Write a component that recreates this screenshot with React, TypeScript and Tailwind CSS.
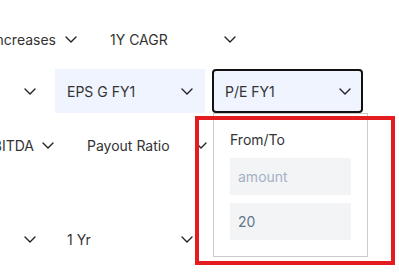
import React from "react";

const Chevron = () => (
    <svg width="12" height="7" viewBox="0 0 12 7" fill="none" className="shrink-0">
        <polyline points="1,1 6,6 11,1" stroke="#222" strokeWidth="1.4" strokeLinecap="round" strokeLinejoin="round" />
    </svg>
);

interface SelectProps {
    label?: string,
    w: string,
    active?: boolean,
    focused?: boolean,
    children?: React.ReactNode
}

function Select({ label, w, active, focused, children }: SelectProps) {
    let cls = "relative flex items-center justify-between h-[44px] pl-3 pr-3 shrink-0 " + w;
    if (active) cls += " bg-[#eff4ff]";
    if (focused) cls += " border-2 border-[#111] rounded-[4px] pl-[11px] pr-[10px]";
    return (
        <div className={cls}>
            <span className="whitespace-nowrap">{label}</span>
            <Chevron />
            {children}
        </div>
    );
}

export default function App() {
    return (
        <div className="relative w-[399px] h-[279px] overflow-hidden bg-white text-[14px] text-[#333] font-['Inter',sans-serif]">
            <div className="flex flex-col pt-[17px]">
                {/* row 1 */}
                <div className="flex gap-2 ml-[-60px]">
                    <div className="flex items-center justify-end gap-[9px] h-[44px] w-[150px] pr-[13px] shrink-0">
                        <span>Increases</span>
                        <Chevron />
                    </div>
                    <Select label="1Y CAGR" w="w-[150px]" />
                </div>

                {/* row 2 */}
                <div className="flex gap-[7px] ml-[-102px] mt-[8px]">
                    <Select w="w-[150px]" />
                    <Select label="EPS G FY1" w="w-[150px]" active />
                    <Select label="P/E FY1" w="w-[151px]" active focused>
                        <div className="absolute top-full left-[-1px] mt-[2px] w-[155px] border border-[#cccccc] bg-white px-4 pt-[16px] pb-[16px] z-10">
                            <div className="leading-5 mb-2">From/To</div>
                            <div className="flex flex-col gap-2">
                                <input
                                    className="h-[37px] w-[121px] bg-[#f3f4f6] px-2 text-[14px] text-[#64748b] placeholder:text-[#a5b1c4] outline-none"
                                    placeholder="amount"
                                />
                                <input
                                    className="h-[37px] w-[121px] bg-[#f3f4f6] px-2 text-[14px] text-[#64748b] outline-none"
                                    defaultValue="20"
                                />
                            </div>
                        </div>
                    </Select>
                </div>

                {/* row 3 */}
                <div className="flex gap-[9px] ml-[-84px] mt-[10px]">
                    <div className="flex items-center justify-end gap-[8px] h-[44px] w-[150px] pr-[12px] shrink-0">
                        <span>EBITDA</span>
                        <Chevron />
                    </div>
                    <Select label="Payout Ratio" w="w-[144px]" />
                </div>

                {/* row 4 */}
                <div className="flex gap-[7px] ml-[-102px] mt-[50px]">
                    <Select w="w-[150px]" />
                    <Select label="1 Yr" w="w-[150px]" />
                </div>
            </div>

            <div className="absolute left-[195px] top-[116px] w-[200px] h-[149px] border-4 border-[#e41b1f] z-20 pointer-events-none" />
        </div>
    );
}
